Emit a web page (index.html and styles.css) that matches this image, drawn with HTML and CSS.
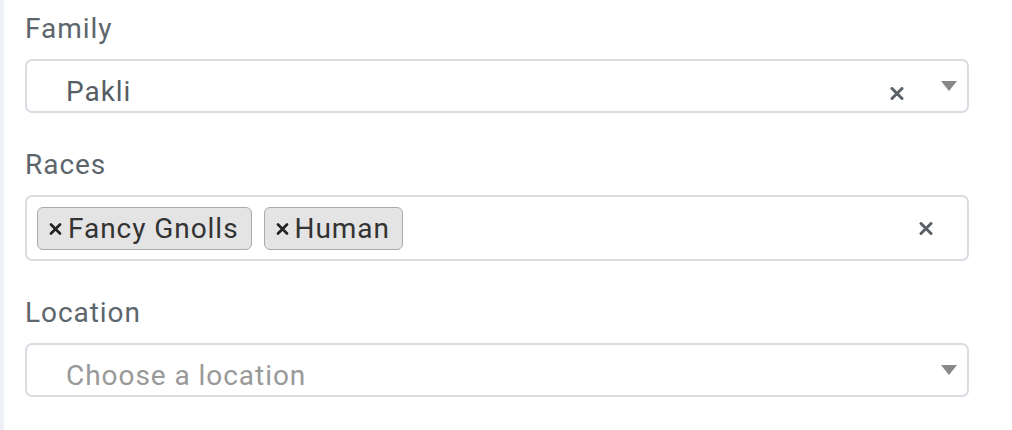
FILE: index.html
```html
<!DOCTYPE html>
<html>
<head>
<meta charset="utf-8">
<link rel="stylesheet" href="styles.css">
</head>
<body>
<div class="panel">
  <div class="field">
    <div class="label">Family</div>
    <div class="select single">
      <span class="value">Pakli</span>
      <span class="clear"><svg width="14" height="13" viewBox="0 0 14 13"><path d="M2 1.5 L12 11.5 M12 1.5 L2 11.5" stroke="#5a6167" stroke-width="3" stroke-linecap="round"/></svg></span>
      <span class="arrow"></span>
    </div>
  </div>
  <div class="field">
    <div class="label">Races</div>
    <div class="select multi">
      <span class="tag"><svg class="tag-x" width="13" height="12" viewBox="0 0 13 12"><path d="M2 1.5 L11 10.5 M11 1.5 L2 10.5" stroke="#222" stroke-width="2.6" stroke-linecap="round"/></svg>Fancy Gnolls</span>
      <span class="tag"><svg class="tag-x" width="13" height="12" viewBox="0 0 13 12"><path d="M2 1.5 L11 10.5 M11 1.5 L2 10.5" stroke="#222" stroke-width="2.6" stroke-linecap="round"/></svg>Human</span>
      <span class="clear multi-clear"><svg width="14" height="13" viewBox="0 0 14 13"><path d="M2 1.5 L12 11.5 M12 1.5 L2 11.5" stroke="#5a6167" stroke-width="3" stroke-linecap="round"/></svg></span>
    </div>
  </div>
  <div class="field">
    <div class="label">Location</div>
    <div class="select single">
      <span class="value placeholder">Choose a location</span>
      <span class="arrow arrow-only"></span>
    </div>
  </div>
</div>
</body>
</html>
```
FILE: styles.css
```css
* { box-sizing: border-box; }
html, body { margin: 0; padding: 0; background: #fff; }
body { font-family: Roboto, "Liberation Sans", sans-serif; letter-spacing: 0.95px; }
.panel {
  border-left: 4px solid #edf0f5;
  min-height: 430px;
  padding: 12px 0 0 21px;
  width: 969px;
  display: flex;
  flex-direction: column;
  gap: 35px;
}
.label {
  font-size: 28px;
  line-height: 34px;
  color: #5d666c;
  margin-bottom: 13px;
}
.select {
  width: 944px;
  border: 2px solid #d9dde2;
  border-radius: 7px;
  display: flex;
}
.single {
  height: 54px;
  padding: 14px 10px 0 39px;
  align-items: flex-start;
}
.value {
  font-size: 28px;
  line-height: 34px;
  color: #555e64;
}
.placeholder { color: #999; }
.clear { display: block; margin-left: auto; margin-top: 12px; line-height: 0; }
.arrow {
  width: 0; height: 0;
  border-left: 8.5px solid transparent;
  border-right: 8.5px solid transparent;
  border-top: 10px solid #888;
  margin-left: 37px;
  margin-top: 6px;
}
.arrow-only { margin-left: auto; }
.multi {
  height: 66px;
  padding: 9px 10px;
  align-items: center;
  gap: 12px;
}
.tag {
  display: flex;
  align-items: center;
  height: 43px;
  padding: 0 12px 0 11px;
  background: #e4e4e4;
  border: 1px solid #aaa;
  border-radius: 6px;
  font-size: 28px;
  color: #333;
}
.tag-x { margin-right: 6px; margin-top: 1px; }
.multi-clear { margin-top: 0; margin-right: 24px; }
```
